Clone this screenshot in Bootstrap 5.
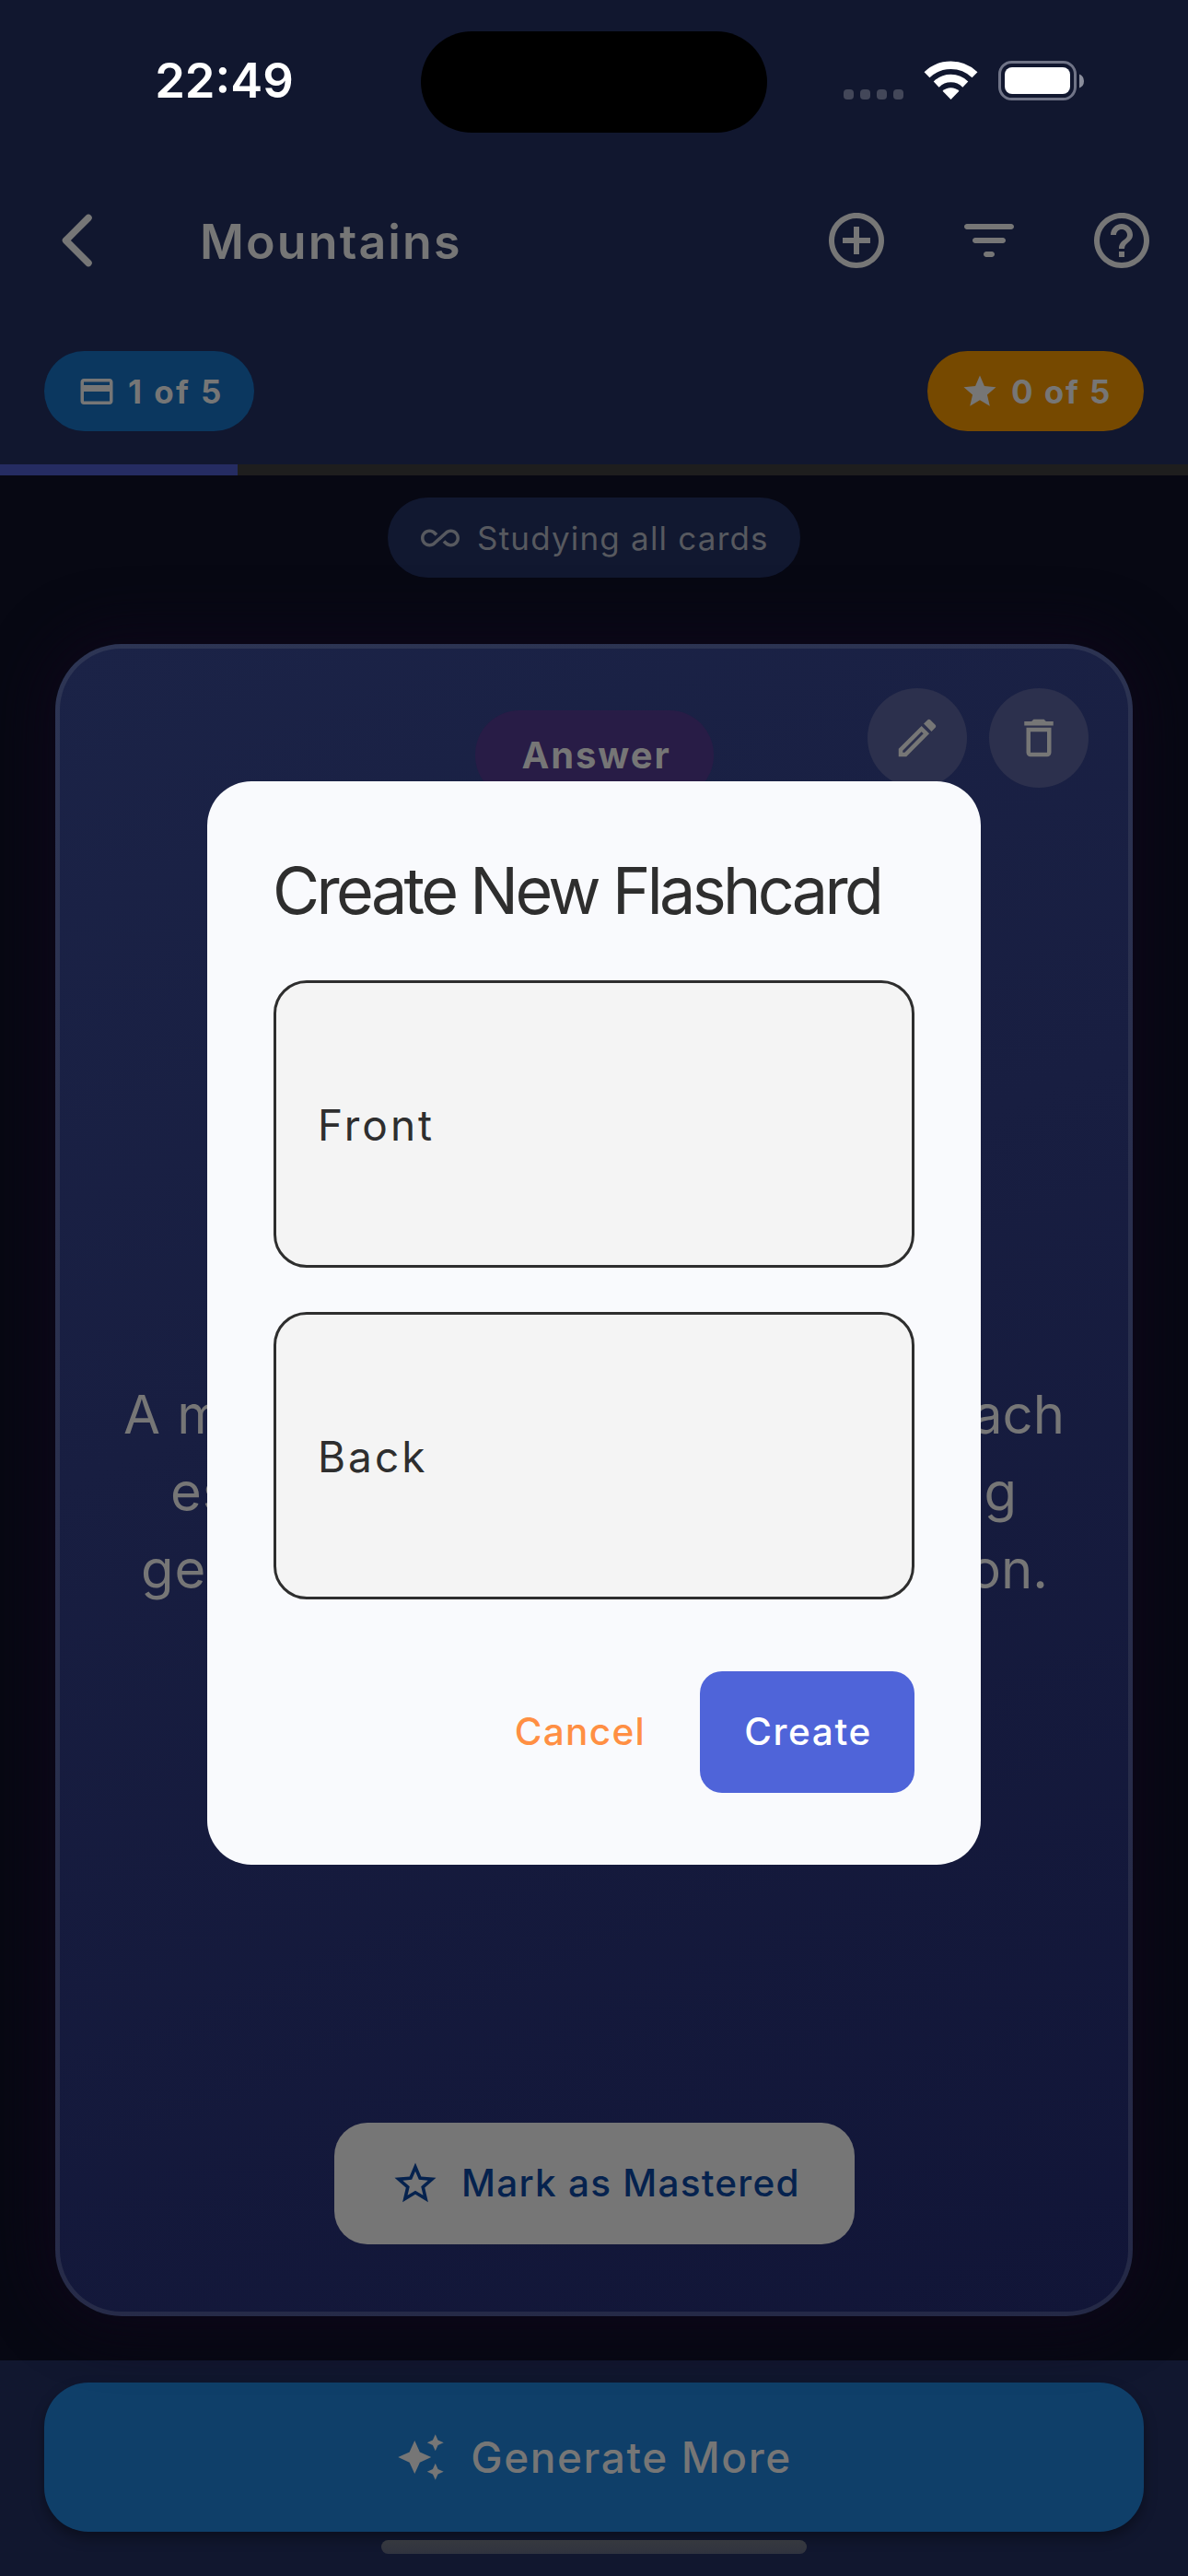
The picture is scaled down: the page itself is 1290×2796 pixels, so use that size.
<!DOCTYPE html>
<html lang="en">
<head>
<meta charset="utf-8">
<meta name="viewport" content="width=device-width, initial-scale=1">
<title>Mountains</title>
<link href="https://cdn.jsdelivr.net/npm/bootstrap@5.3.0/dist/css/bootstrap.min.css" rel="stylesheet">
<style>
body{font-family:Inter,"Liberation Sans",sans-serif;background:#070813;color:#767676;width:1290px;height:2796px;overflow:hidden;line-height:1}
svg{display:block;flex:none}
span{white-space:nowrap}
.ico{fill:currentColor}
.top-area,.bottom-area{background:#11172f}
.status-row{height:175px}
.clock{width:457px;padding-left:30px;font-size:52.5px;font-weight:600;color:#fff}
.island{width:376px;height:110px;border-radius:55px;background:#000;margin-top:3px}
.status-icons{margin-left:83px}
.nav-row{height:172px;padding:0 36px 0 60px}
.nav-title{font-size:52px;font-weight:600;letter-spacing:2.1px;margin-left:109px;padding-top:3px}
.nav-tools{gap:72px}
.stat-row{padding:34px 48px 36px}
.pill{height:87px;border-radius:44px;font-size:35px;padding:0 36px;gap:13px}
.pill span{padding-top:2px}
.pill-blue{background:#0b375f;width:228px;letter-spacing:2.39px}
.pill-gold{background:#764900;width:235px;letter-spacing:1.89px}
.bar{height:12px;background:#1e1e1e;border-radius:0}
.bar .progress-bar{background:#252c62}
.study-area{height:2046px;padding:24px 60px 48px}
.pill-study{background:#111830;color:#57595f;width:448px;gap:19px;letter-spacing:1.19px}
.flash{margin-top:72px;height:1815px;width:1170px;border-radius:72px;border:5px solid rgba(155,160,160,.14);background:linear-gradient(158deg,#1b2347,#181e41 40%,#111537) border-box;box-shadow:0 0 60px 14px #0d0719}
.pill-answer{background:#281c46;width:259px;height:97px;border-radius:48px;font-size:40px;letter-spacing:1.91px;top:67px;left:451px;padding-left:4px}
.round-btn{width:108px;height:108px;background:#2c304d}
.tools{top:43px;right:43px;gap:24px}
.answer-text{font-size:58px;line-height:84px;top:789px;left:0;width:1160px}
.answer-text span:first-child{letter-spacing:1px}
.l1{padding:0 69px}.l2{padding:0 121px 0 120px}.l3{padding:0 87px 0 88px}
.master-btn{width:565px;height:132px;border-radius:36px;background:#767676;color:#05224e;font-size:40.5px;letter-spacing:1.24px;bottom:73px;left:298px;padding-left:61px;gap:23px}
.bottom-area{height:234px;padding:24px 48px 0}
.gen-btn{height:162px;border-radius:48px;background:#0f3f69;font-size:46px;letter-spacing:1.59px;box-shadow:0 7px 14px rgba(0,0,0,.35);gap:27px}
.home-line{width:462px;height:15px;border-radius:8px;margin:9px auto 0;background:linear-gradient(#36393f,#30333f)}
.overlay{z-index:10;padding-top:847.5px}
.sheet{width:840px;height:1176px;border-radius:48px;background:#f9fafd;color:#2e2e2e;padding:84px 72px 0}
.sheet-title{font-size:70px;line-height:70px;font-weight:400;letter-spacing:-3.64px;margin:0 0 62px -1px}
.field{height:312px;border:3px solid #2e2e2e;border-radius:36px;background:#f4f4f4;padding:3px 0 0 45px;font-size:46px;letter-spacing:3px}
.field + .field{margin-top:48px}
.sheet-actions{gap:59px;margin-top:78px;font-size:40.5px}
.sheet-actions span{padding-top:2px}
.create-btn{width:233px;height:132px;border-radius:24px;background:#4f64d9;color:#fff;letter-spacing:1.6px;padding-left:2px}
.cancel-btn{color:#ff8f43;letter-spacing:1.3px}
</style>
<script src="https://cdn.jsdelivr.net/npm/bootstrap@5.3.0/dist/js/bootstrap.bundle.min.js"></script>
</head>
<body class="d-flex flex-column m-0">
<header class="top-area">
  <div class="status-row d-flex align-items-center">
    <div class="clock text-center"><span>22:49</span></div>
    <div class="island"></div>
    <svg class="status-icons" width="262" height="46" viewBox="916 64 262 46">
      <g fill="#434759"><rect x="916" y="96" width="11" height="11" rx="4"/><rect x="934" y="96" width="11" height="11" rx="4"/><rect x="952" y="96" width="11" height="11" rx="4"/><rect x="970" y="96" width="11" height="11" rx="4"/></g>
      <g fill="none" stroke="#fff"><path stroke-width="8.500" d="M1006.500 80.300a37.500 37.500 0 0 1 52 0"/><path stroke-width="8.500" d="M1016.700 90.600a22.500 22.500 0 0 1 31.600 0"/></g>
      <path fill="#fff" d="M1032.500 107l-9-9.200a13 13 0 0 1 18 0z"/>
      <rect x="1085.500" y="66.500" width="82" height="40" rx="13" fill="none" stroke="#707487" stroke-width="3"/>
      <rect x="1091" y="72" width="71" height="29" rx="8" fill="#fff"/>
      <path fill="#8b8e9c" d="M1172 79.500q5 2 5 7.500t-5 7.500z"/>
    </svg>
  </div>
  <nav class="nav-row d-flex align-items-center">
    <svg width="48" height="72" viewBox="60 225 48 72" fill="none" stroke="currentColor" stroke-width="7.500" stroke-linecap="round" stroke-linejoin="round"><path d="M96 236.500L71.500 261L96 285.500"/></svg>
    <span class="nav-title">Mountains</span>
    <div class="nav-tools d-flex ms-auto">
      <svg class="ico" width="72" height="72" viewBox="0 0 24 24"><path d="M13 7h-2v4H7v2h4v4h2v-4h4v-2h-4V7zm-1-5C6.480 2 2 6.480 2 12s4.480 10 10 10 10-4.480 10-10S17.520 2 12 2zm0 18c-4.410 0-8-3.590-8-8s3.590-8 8-8 8 3.590 8 8-3.590 8-8 8z"/></svg>
      <svg class="ico" width="72" height="72" viewBox="0 0 24 24"><path d="M11 18h2c.55 0 1-.45 1-1s-.45-1-1-1h-2c-.55 0-1 .45-1 1s.45 1 1 1zM3 7c0 .55.45 1 1 1h16c.55 0 1-.45 1-1s-.45-1-1-1H4c-.55 0-1 .45-1 1zm4 6h10c.55 0 1-.45 1-1s-.45-1-1-1H7c-.55 0-1 .45-1 1s.45 1 1 1z"/></svg>
      <svg class="ico" width="72" height="72" viewBox="0 0 24 24"><path d="M11 18h2v-2h-2v2zm1-16C6.480 2 2 6.480 2 12s4.480 10 10 10 10-4.480 10-10S17.520 2 12 2zm0 18c-4.410 0-8-3.590-8-8s3.590-8 8-8 8 3.590 8 8-3.590 8-8 8zm0-14c-2.210 0-4 1.790-4 4h2c0-1.100.9-2 2-2s2 .9 2 2c0 2-3 1.750-3 5h2c0-2.250 3-2.500 3-5 0-2.210-1.790-4-4-4z"/></svg>
    </div>
  </nav>
  <div class="stat-row d-flex justify-content-between">
    <div class="pill pill-blue d-flex align-items-center fw-bold">
      <svg class="ico" width="42" height="42" viewBox="0 0 24 24"><path d="M20 4H4c-1.110 0-1.990.89-1.990 2L2 18c0 1.110.89 2 2 2h16c1.110 0 2-.89 2-2V6c0-1.110-.89-2-2-2zm0 14H4v-6h16v6zm0-10H4V6h16v2z"/></svg>
      <span>1 of 5</span>
    </div>
    <div class="pill pill-gold d-flex align-items-center fw-bold">
      <svg class="ico" width="42" height="42" viewBox="0 0 24 24"><path d="M12 17.270L18.180 21l-1.640-7.030L22 9.240l-7.190-.61L12 2 9.190 8.630 2 9.240l5.460 4.730L5.820 21z"/></svg>
      <span>0 of 5</span>
    </div>
  </div>
  <div class="progress bar"><div class="progress-bar" style="width:20%"></div></div>
</header>

<main class="study-area d-flex flex-column align-items-center">
  <div class="pill pill-study d-flex align-items-center">
    <svg class="ico" width="42" height="42" viewBox="0 0 24 24"><path d="M18.600 6.620c-1.440 0-2.800.56-3.770 1.530L12 10.660 10.480 12h.01L7.800 14.390c-.64.64-1.490.99-2.400.99-1.870 0-3.390-1.510-3.390-3.380S3.530 8.620 5.400 8.620c.91 0 1.760.35 2.440 1.030l1.130 1 1.510-1.340L9.220 8.200C8.200 7.180 6.840 6.620 5.400 6.620 2.420 6.620 0 9.040 0 12s2.420 5.380 5.400 5.380c1.440 0 2.800-.56 3.770-1.530l2.830-2.500.01.010L13.520 12h-.01l2.690-2.390c.64-.64 1.490-.99 2.400-.99 1.870 0 3.390 1.510 3.390 3.380s-1.520 3.380-3.390 3.380c-.9 0-1.760-.35-2.440-1.030l-1.140-1.010-1.510 1.340 1.270 1.120c1.020 1.010 2.370 1.570 3.820 1.570 2.980 0 5.400-2.410 5.400-5.380s-2.420-5.370-5.400-5.370z"/></svg>
    <span>Studying all cards</span>
  </div>
  <section class="flash position-relative">
    <div class="pill-answer position-absolute d-flex align-items-center justify-content-center fw-bold"><span>Answer</span></div>
    <div class="tools position-absolute d-flex">
      <div class="round-btn rounded-circle d-flex align-items-center justify-content-center"><svg class="ico" width="54" height="54" viewBox="0 0 24 24"><path d="M14.060 9.020l.92.92L5.920 19H5v-.92l9.060-9.060M17.660 3c-.25 0-.51.1-.7.29l-1.830 1.830 3.750 3.750 1.830-1.830c.39-.39.39-1.020 0-1.410l-2.340-2.340c-.2-.2-.45-.29-.71-.29zm-3.600 3.190L3 17.250V21h3.750L17.810 9.940l-3.750-3.750z"/></svg></div>
      <div class="round-btn rounded-circle d-flex align-items-center justify-content-center"><svg class="ico" width="54" height="54" viewBox="0 0 24 24"><path d="M6 19c0 1.100.9 2 2 2h8c1.100 0 2-.9 2-2V7H6v12zM8 9h8v10H8V9zm7.500-5l-1-1h-5l-1 1H5v2h14V4z"/></svg></div>
    </div>
    <div class="answer-text position-absolute">
      <div class="l1 d-flex justify-content-between"><span>A m</span><span>ach</span></div>
      <div class="l2 d-flex justify-content-between"><span>es</span><span>g</span></div>
      <div class="l3 d-flex justify-content-between"><span>ge</span><span>on.</span></div>
    </div>
    <div class="master-btn position-absolute d-flex align-items-center">
      <svg class="ico" width="54" height="54" viewBox="0 0 24 24"><path d="M22 9.240l-7.190-.62L12 2 9.190 8.630 2 9.240l5.460 4.730L5.820 21 12 17.270 18.180 21l-1.630-7.030L22 9.240zM12 15.400l-3.760 2.270 1-4.280-3.320-2.880 4.380-.38L12 6.100l1.710 4.040 4.380.38-3.320 2.880 1 4.280L12 15.400z"/></svg>
      <span style="font-weight:500">Mark as Mastered</span>
    </div>
  </section>
</main>

<footer class="bottom-area">
  <div class="gen-btn d-flex align-items-center justify-content-center">
    <svg class="ico" width="54" height="54" viewBox="0 0 24 24"><path d="M19 9l1.250-2.750L23 5l-2.750-1.250L19 1l-1.250 2.750L15 5l2.750 1.250L19 9zm-7.500.5L9 4 6.500 9.500 1 12l5.500 2.500L9 20l2.500-5.500L17 12l-5.500-2.500zM19 15l-1.250 2.750L15 19l2.750 1.250L19 23l1.250-2.750L23 19l-2.750-1.250L19 15z"/></svg>
    <span style="font-weight:500">Generate More</span>
  </div>
  <div class="home-line"></div>
</footer>

<div class="overlay position-fixed top-0 start-0 w-100 d-flex justify-content-center">
  <div class="sheet" role="dialog">
    <h1 class="sheet-title"><span>Create New Flashcard</span></h1>
    <div class="field d-flex align-items-center"><span>Front</span></div>
    <div class="field d-flex align-items-center"><span>Back</span></div>
    <div class="sheet-actions d-flex align-items-center justify-content-end">
      <span class="cancel-btn" style="font-weight:500">Cancel</span>
      <div class="create-btn d-flex align-items-center justify-content-center"><span style="font-weight:500">Create</span></div>
    </div>
  </div>
</div>
</body>
</html>
